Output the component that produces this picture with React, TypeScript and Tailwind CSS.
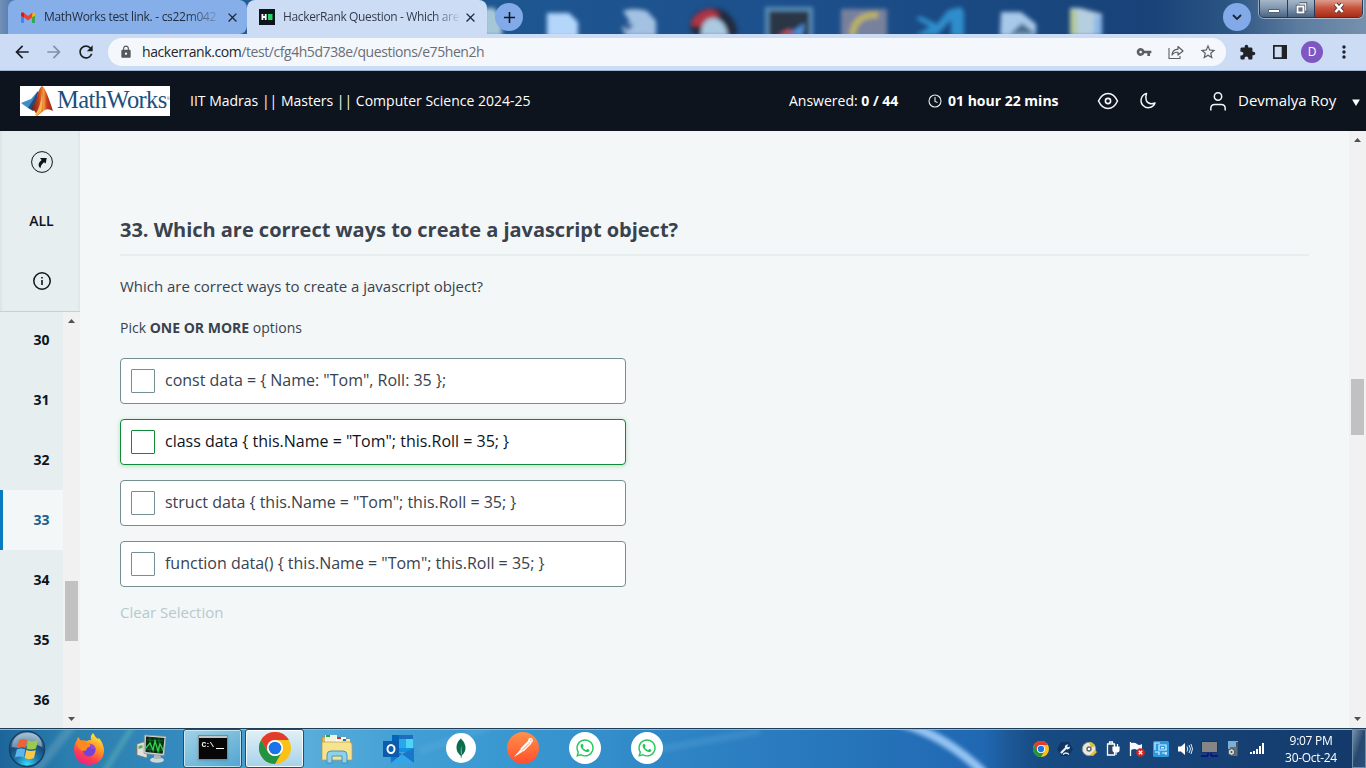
import type { ReactNode } from "react";
import { MdArrowBack, MdArrowForward, MdRefresh, MdLock, MdVpnKey, MdStarBorder, MdExtension, MdMoreVert, MdClose, MdAdd } from "react-icons/md";
import { FaWhatsapp } from "react-icons/fa";
import { SiMongodb } from "react-icons/si";

function ChromeLogo({ size }: { size: number }) {
  return (
    <svg width={size} height={size} viewBox="0 0 32 32">
      <circle cx="16" cy="16" r="16" fill="#fbc116" />
      <path d="M2.14 8A16 16 0 0 1 29.86 8H16a8 8 0 0 0-6.93 12z" fill="#e33b2e" />
      <path d="M2.14 8A16 16 0 0 0 16 32l6.93-12a8 8 0 0 1-13.86 0z" fill="#229342" />
      <circle cx="16" cy="16" r="8" fill="#fff" />
      <circle cx="16" cy="16" r="6.3" fill="#1a73e8" />
    </svg>
  );
}

function DesktopGlass() {
  return (
    <svg className="absolute inset-0" width="1366" height="34" viewBox="0 0 1366 34">
      <defs>
        <linearGradient id="glass" x1="0" x2="1" y1="0" y2="0">
          <stop offset="0" stopColor="#7190b8" />
          <stop offset=".02" stopColor="#2b5f9c" />
          <stop offset=".35" stopColor="#1e5792" />
          <stop offset=".6" stopColor="#1c4f8b" />
          <stop offset=".84" stopColor="#184278" />
          <stop offset=".9" stopColor="#2c5583" />
          <stop offset=".95" stopColor="#5b7b9f" />
          <stop offset="1" stopColor="#7691ac" />
        </linearGradient>
        <filter id="soft" x="-20%" y="-20%" width="140%" height="140%">
          <feGaussianBlur stdDeviation="2" />
        </filter>
      </defs>
      <rect width="1366" height="34" fill="url(#glass)" />
      <g filter="url(#soft)">
        <path d="M484 8h10l8 10v18h-18z" fill="#a6c7d8" />
        <path d="M547 13h22l9 9v15h-31z" fill="#b4d6fb" />
        <path d="M623 11q10-4 24 0l9 10v15h-30l-4-8 8-6z" fill="#a3c1e3" />
        <path d="M620 24h14l-6 7z" fill="#28588f" />
        <path d="M690 28q0-18 22-20 20 0 26 24l-4 4h-38z" fill="#232a3d" />
        <path d="M690 25q6-15 22-16l8 6-16 12z" fill="#ae3647" />
        <path d="M701 36q0-17 12-18 12 1 15 18z" fill="#abc9df" />
        <rect x="765" y="7" width="48" height="30" fill="#5a8db8" />
        <rect x="769" y="11" width="40" height="26" fill="#2a3645" />
        <path d="M777 36l12-7 6 6z" fill="#c55263" />
        <path d="M790 33l15-10-3 14z" fill="#4e8edb" />
        <rect x="841" y="9" width="46" height="30" fill="#78819c" />
        <path d="M878 15q-24-1-26 21" fill="none" stroke="#bdb45e" strokeWidth="6" />
        <path d="M948 10l13-3 3 5v24h-13V20l-14 15h-22l15-8-14-8 4-3 17 8z" fill="#2f8dcb" />
        <path d="M1001 12h20l15 12v12h-36z" fill="#a9c9e9" />
        <path d="M1010 34l12-11 14 11z" fill="#476d8f" />
        <path d="M1070 8h10l22 6v22h-32z" fill="#b5cfe0" />
        <path d="M1070 10h7v26h-7z" fill="#b5c896" />
        <path d="M1094 16h8v20h-8z" fill="#8cb8e8" />
      </g>
    </svg>
  );
}

function WindowButtons() {
  return (
    <div className="absolute right-[3px] top-0 flex h-[18px] w-[104px] overflow-hidden rounded-b-[5px] border border-t-0 border-[#283b52] shadow-[0_0_0_1px_rgba(255,255,255,0.45)]">
      <div className="flex w-[28px] items-end justify-center border-r border-[#283b52] bg-linear-to-b from-[#a6b6c9] via-[#8298b0] via-45% to-[#4a6482] pb-[4px]">
        <div className="h-[4px] w-[12px] rounded-[1px] border border-[#53606f] bg-white" />
      </div>
      <div className="flex w-[27px] items-center justify-center border-r border-[#283b52] bg-linear-to-b from-[#a6b6c9] via-[#8298b0] via-45% to-[#4a6482] pb-px">
        <svg width="13" height="13" viewBox="0 0 13 13">
          <path d="M4.5 2h6v6h-2" fill="none" stroke="#4b5867" strokeWidth="3.4" />
          <path d="M4.5 2h6v6h-2" fill="none" stroke="#fff" strokeWidth="1.6" />
          <rect x="2.500" y="4.500" width="6" height="6" fill="#5b6b80" stroke="#4b5867" strokeWidth="3.4" />
          <rect x="2.500" y="4.500" width="6" height="6" fill="#66758a" stroke="#fff" strokeWidth="1.8" />
        </svg>
      </div>
      <div className="flex flex-1 items-center justify-center bg-linear-to-b from-[#dc9c8c] via-[#c8553f] via-45% to-[#a82a16] pb-[2px]">
        <svg width="14" height="12" viewBox="0 0 14 12">
          <path d="M3.5 2l7 8M10.500 2l-7 8" stroke="#5c3b3c" strokeWidth="4.4" />
          <path d="M3.500 2l7 8M10.500 2l-7 8" stroke="#fff" strokeWidth="2.6" />
        </svg>
      </div>
    </div>
  );
}

function TabStrip() {
  return (
    <div className="relative h-[34px] overflow-hidden">
      <DesktopGlass />
      <div className="relative flex h-full pl-2">
        <div className="flex h-full w-[239px] items-center rounded-t-lg rounded-br-lg bg-[#86aee9] pl-[13px]">
          <svg width="14" height="11" viewBox="0 0 28 22">
            <path d="M0 3v17q0 2 2 2h4V9z" fill="#4285f4" />
            <path d="M28 3v17q0 2-2 2h-4V9z" fill="#34a853" />
            <path d="M22 2v9l6-4V4q0-5-6-2z" fill="#fbbc04" />
            <path d="M0 4q0-5 5-3l9 7 9-7-1 10-8 6-8-6-6-4z" fill="#ea4335" />
            <path d="M0 4v3l6 4V2Q0-1 0 4z" fill="#c5221f" />
          </svg>
          <span className="ml-[9px] w-[178px] overflow-hidden whitespace-nowrap bg-linear-to-r from-[#1e2a3a] from-80% to-[#86aee9] bg-clip-text text-[12px] tracking-[-0.3px] text-transparent">MathWorks test link. - cs22m042</span>
          <MdClose className="ml-[3px] size-[15px] text-[#1d2737]" />
        </div>
        <div className="flex h-full w-[240px] items-center rounded-t-lg bg-[#ccdcf5] pl-3">
          <svg width="16" height="16" viewBox="0 0 16 16">
            <path d="M0 0h16v16H0z" fill="#0e141e" />
            <path d="M2.500 5h1.800v2h1.500V5H7.600v6H5.800V9H4.300v2H2.500z" fill="#fff" />
            <path d="M9 5h4.500v6H9z" fill="#1fd85f" />
          </svg>
          <span className="ml-2 w-[178px] overflow-hidden whitespace-nowrap bg-linear-to-r from-[#303846] from-84% to-[#ccdcf5] bg-clip-text text-[12px] tracking-[-0.36px] text-transparent">HackerRank Question - Which are</span>
          <MdClose className="ml-[2px] size-[15px] text-[#1d2737]" />
        </div>
        <div className="ml-2 mt-[3px] flex size-7 items-center justify-center rounded-full bg-[#82a9e8]">
          <MdAdd className="size-[19px] text-[#14181e]" />
        </div>
        <div className="ml-auto mr-[115px] mt-[3px] flex size-7 items-center justify-center rounded-full bg-[#82a9e8]">
          <svg width="10" height="6" viewBox="0 0 10 6"><path d="M1 1l4 4 4-4" fill="none" stroke="#1c2534" strokeWidth="1.8" /></svg>
        </div>
      </div>
      <WindowButtons />
    </div>
  );
}

function Toolbar() {
  return (
    <div className="flex h-[37px] items-start border-b border-[#9fb5d2] bg-[#ccdcf5] pt-1">
      <div className="flex h-7 w-[108px] shrink-0 items-center pl-3">
        <MdArrowBack className="size-5 text-[#1b1f26]" />
        <MdArrowForward className="ml-3 size-5 text-[#8290a9]" />
        <MdRefresh className="ml-3 size-5 text-[#1b1f26]" />
      </div>
      <div className="flex h-7 w-[1118px] items-center rounded-full bg-[#f4f8fd] pl-[11px]">
        <MdLock className="size-[14px] text-[#54585d]" />
        <span className="ml-[9px] whitespace-nowrap pb-0.5 text-[14px] tracking-[-0.43px] text-[#6a6e74]"><span className="text-[#23262b]">hackerrank.com</span>/test/cfg4h5d738e/questions/e75hen2h</span>
        <MdVpnKey className="ml-auto size-4 text-[#5b5f64]" />
        <svg className="ml-4" width="16" height="16" viewBox="0 0 16 16">
          <path d="M1 4v10.500h11V12" fill="none" stroke="#5b5f64" strokeWidth="1.100" />
          <path d="M4 11q.5-5.500 6-5.800V2.500L15 7l-5 4V8.300Q6 8 4 11z" fill="none" stroke="#5b5f64" strokeWidth="1.200" strokeLinejoin="round" />
        </svg>
        <MdStarBorder className="ml-[15px] mr-[9px] size-[18px] text-[#5b5f64]" />
      </div>
      <div className="flex h-7 flex-1 items-center pl-[13px]">
        <MdExtension className="size-[17px] text-[#202226]" />
        <svg className="ml-[17px]" width="14" height="14" viewBox="0 0 14 14">
          <path d="M0 0h14v14H0zM1.700 1.700v10.600h7V1.700z" fill="#202226" fillRule="evenodd" />
        </svg>
        <div className="ml-[14px] flex size-[22px] items-center justify-center rounded-full bg-[#7e57c2] text-[12px] text-white">D</div>
        <MdMoreVert className="ml-[11px] size-[20px] text-[#202226]" />
      </div>
    </div>
  );
}

function MathWorksLogo() {
  return (
    <div className="flex h-[30px] w-[150px] items-center bg-white">
      <svg className="shrink-0" width="36" height="30" viewBox="0 0 36 30">
        <defs>
          <linearGradient id="peak" x1="0" x2="1">
            <stop offset="0" stopColor="#5b1d1c" />
            <stop offset=".35" stopColor="#c3401d" />
            <stop offset=".58" stopColor="#f39a3c" />
            <stop offset=".72" stopColor="#c9401d" />
            <stop offset="1" stopColor="#952018" />
          </linearGradient>
        </defs>
        <path d="M1 17l10-4 6-7 2-1-7 16-4 1z" fill="#3b8ec9" />
        <path d="M8 22l5-8 5-9-1 17-4 3z" fill="#274c76" />
        <path d="M11 22q5-5 7-15 2-6 4-7 3 0 11 25-5-3-8-1-3 2-8 6-2-6-6-8z" fill="url(#peak)" />
        <path d="M15 29q6-9 7-22 1 13-1 19l-4 4z" fill="#f9b652" />
      </svg>
      <span className="ml-px whitespace-nowrap pb-0.5 font-['Liberation_Serif',serif] text-[24.5px] leading-none tracking-[-0.6px] text-[#1c4f7c]">MathWorks</span>
      <span className="-mt-1 text-[4px] text-[#1c4f7c]">®</span>
    </div>
  );
}

function Header() {
  return (
    <header className="flex h-[60px] items-center bg-[#0e141e] pl-5 text-[14px] text-white">
      <MathWorksLogo />
      <span className="ml-5 w-[599px] whitespace-nowrap pb-0.5">IIT Madras || Masters || Computer Science 2024-25</span>
      <span className="w-[139px] whitespace-nowrap pb-0.5">Answered: <b>0 / 44</b></span>
      <svg width="14" height="14" viewBox="0 0 14 14" fill="none" stroke="#e9edf2" strokeWidth="1.100">
        <circle cx="7" cy="7" r="6" /><path d="M7 3v4.500l2.500 1" />
      </svg>
      <b className="ml-[6px] w-[149px] whitespace-nowrap pb-0.5">01 hour 22 mins</b>
      <svg width="22" height="18" viewBox="0 0 22 18" fill="none" stroke="#f3f6f8" strokeWidth="1.600">
        <path d="M1.500 9Q5 1.500 11 1.500T20.500 9Q17 16.500 11 16.500T1.500 9z" /><circle cx="11" cy="9" r="2.600" />
      </svg>
      <svg className="ml-5" width="18" height="18" viewBox="0 0 18 18" fill="none" stroke="#f3f6f8" strokeWidth="1.500" strokeLinejoin="round">
        <path d="M7.500 1.500A7.200 7.200 0 1 0 16 11Q9.500 13.500 7.300 8.500 6.200 5 7.500 1.500z" />
      </svg>
      <svg className="ml-[52px]" width="18" height="20" viewBox="0 0 18 20" fill="none" stroke="#f3f6f8" strokeWidth="1.500">
        <circle cx="9" cy="5.500" r="3.700" /><path d="M1.800 19.500v-2q0-4 4-4h6.400q4 0 4 4v2" />
      </svg>
      <span className="ml-[11px] w-[114px] whitespace-nowrap pb-0.5 text-[15px]">Devmalya Roy</span>
      <svg className="mt-0.5" width="8" height="7" viewBox="0 0 9 8"><path d="M0 .5h9L4.500 8z" fill="#fff" /></svg>
    </header>
  );
}

function Scrollbar({ lead, thumb }: { lead: string; thumb: string }) {
  return (
    <div className="flex h-full w-[17px] shrink-0 flex-col items-center bg-[#f1f1f1]">
      <svg className="mt-[7px] shrink-0" width="7" height="4" viewBox="0 0 7 4"><path d="M0 4L3.500 0 7 4z" fill="#505050" /></svg>
      <div className={`shrink-0 ${lead}`} />
      <div className={`w-[13px] shrink-0 bg-[#c1c1c1] ${thumb}`} />
      <svg className="mb-[7px] mt-auto shrink-0" width="7" height="4" viewBox="0 0 7 4"><path d="M0 0L3.500 4 7 0z" fill="#505050" /></svg>
    </div>
  );
}

const questionNumbers = [30, 31, 32, 33, 34, 35, 36];

function Sidebar() {
  return (
    <aside className="flex w-20 shrink-0 flex-col bg-[#e7eeef] text-[14px] font-bold text-[#0e141e]">
      <div className="flex h-[181px] shrink-0 flex-col items-center border-b border-[#c5d1d8] pl-1 shadow-[inset_3px_0_3px_-2px_#d4dfe4,inset_-3px_0_3px_-2px_#d9e2e6]">
        <div className="flex h-[61px] items-center">
          <svg width="22" height="22" viewBox="0 0 22 22">
            <circle cx="11" cy="11" r="10.400" fill="none" stroke="#0e141e" strokeWidth="1" />
            <path d="M9 7h6.700l-1 5.500-1.700-1.200Q10 13.500 9.300 17.200 5 13.500 10.600 9z" fill="#0e141e" />
          </svg>
        </div>
        <div className="flex h-[59px] items-center pb-0.5 pr-px font-semibold">ALL</div>
        <div className="flex h-[60px] items-center">
          <svg width="18" height="18" viewBox="0 0 18 18">
            <circle cx="9" cy="9" r="8.200" fill="none" stroke="#0e141e" strokeWidth="1.500" />
            <path d="M9 8v5M9 5v1.500" stroke="#0e141e" strokeWidth="1.600" />
          </svg>
        </div>
      </div>
      <div className="flex min-h-0 flex-1 overflow-hidden">
        <div className="-mt-0.5 w-[63px]">
          {questionNumbers.map((n) => (
            <div
              key={n}
              className={n === 33 ? "flex h-[60px] items-center justify-center border-l-[3px] border-[#0b7bc1] bg-[#f3f7f7] pb-0.5 pl-[17px] text-[#1b5f8f]" : "flex h-[60px] items-center justify-center pb-0.5 pl-5"}
            >
              {n}
            </div>
          ))}
        </div>
        <Scrollbar lead="h-[258px]" thumb="h-[60px]" />
      </div>
    </aside>
  );
}

const options = [
  'const data = { Name: "Tom", Roll: 35 };',
  'class data { this.Name = "Tom"; this.Roll = 35; }',
  'struct data { this.Name = "Tom"; this.Roll = 35; }',
  'function data() { this.Name = "Tom"; this.Roll = 35; }',
];

function Question() {
  return (
    <main className="min-w-0 flex-1 bg-[#f3f7f7] pl-10 text-[#39424e]">
      <h1 className="mt-[84px] h-[39px] w-[1189px] whitespace-nowrap text-[20px] font-bold leading-[30px] tracking-[-0.02px]">33. Which are correct ways to create a javascript object?</h1>
      <div className="h-[2px] w-[1189px] bg-[#e7eeef]" />
      <p className="mt-5 text-[15px] leading-[21px] tracking-[-0.02px]">Which are correct ways to create a javascript object?</p>
      <p className="mt-[21px] text-[14px] leading-5">Pick <b>ONE OR MORE</b> options</p>
      <div className="mt-5 flex flex-col gap-[15px]">
        {options.map((text, i) => (
          <label
            key={text}
            className={
              i === 1
                ? "flex h-[46px] w-[506px] items-center whitespace-nowrap rounded border border-[#0f8a37] bg-white pl-[10px] text-[16px] text-[#0e141e] shadow-[0_1px_4px_rgba(15,138,55,0.25)]"
                : "flex h-[46px] w-[506px] items-center whitespace-nowrap rounded border border-[#738f93] bg-white pl-[10px] text-[16px]"
            }
          >
            <span className={i === 1 ? "mr-[10px] size-6 rounded-[1px] border border-[#0f8a37]" : "mr-[10px] size-6 rounded-[1px] border border-[#738f93]"} />
            <span className="pb-0.5 tracking-[-0.01px]">{text}</span>
          </label>
        ))}
      </div>
      <button className="mt-[13px] block text-[15px] leading-6 text-[#b7c9cc]">Clear Selection</button>
    </main>
  );
}

function TaskSlot({ children }: { children: ReactNode }) {
  return <div className="flex w-[62px] shrink-0 items-center justify-center">{children}</div>;
}

function StartOrb() {
  return (
    <svg width="38" height="38" viewBox="0 0 38 38">
      <defs>
        <radialGradient id="orb" cx=".5" cy=".95" r=".9">
          <stop offset="0" stopColor="#38e0ff" />
          <stop offset=".35" stopColor="#1b7db4" />
          <stop offset=".7" stopColor="#174a78" />
          <stop offset="1" stopColor="#7da5c2" />
        </radialGradient>
      </defs>
      <circle cx="19" cy="19" r="17.500" fill="url(#orb)" stroke="#1a4162" strokeWidth="1.500" />
      <path d="M4 17Q5 4 19 3t15 14q-7-4-15-1T4 17z" fill="#c9dbe8" opacity=".5" />
      <path d="M11 10q4-2 8 0l-1.500 8q-4-2-8.500 0z" fill="#ed6134" />
      <path d="M20 10.500q5 2 10-.5l-2 8.500q-5 2-9.500 0z" fill="#9cca4a" />
      <path d="M8.800 19.500q4-2 8.500 0l-1.800 8q-4-2-8.500 0z" fill="#60b4ec" />
      <path d="M18.300 20q5 2 9.500 0L26 28q-5 2.300-9.400 0z" fill="#fcc843" />
    </svg>
  );
}

function Firefox() {
  return (
    <svg width="32" height="32" viewBox="0 0 32 32">
      <defs>
        <linearGradient id="fox" x1=".8" x2=".3" y1="0" y2="1">
          <stop offset="0" stopColor="#fff14a" />
          <stop offset=".4" stopColor="#ff9a22" />
          <stop offset=".75" stopColor="#ff3b53" />
          <stop offset="1" stopColor="#e8218c" />
        </linearGradient>
      </defs>
      <path d="M1 17Q1 11 4 7l1-3 3 4q3-1 6 0 1-1 4-1-1-4 2-7 2 4 5 6l1-1q5 6 5 13-1 13-15 14Q2 31 1 17z" fill="url(#fox)" />
      <circle cx="16" cy="17" r="6.500" fill="#7343d8" />
      <path d="M3 10q4-4 9-2 3 3 7 3-2 3-5 4 0 3-4 3-4-1-7-8z" fill="#ff8920" />
      <path d="M17 11q5 0 6 6-3-2-5-1z" fill="#9d48d4" />
    </svg>
  );
}

function Monitor() {
  return (
    <svg width="32" height="30" viewBox="0 0 32 30">
      <path d="M1 11l8-4v16l-8-2z" fill="#6d7374" />
      <path d="M2 10l10-3v17l-10-3z" fill="#dfe3e0" stroke="#747b7b" strokeWidth=".7" />
      <path d="M3.500 12l4-1v3l-4 1z" fill="#5fae4b" />
      <ellipse cx="22" cy="26" rx="7" ry="2.800" fill="#cfd6d8" />
      <path d="M19 18h6l1 7h-7z" fill="#aeb7ba" />
      <path d="M9.500 1l21.500 1.500-2 19-20-2z" fill="#d2d8d5" stroke="#89928f" strokeWidth=".7" />
      <path d="M11 2.500l18.500 1.500-1.800 15.800-17.200-1.800z" fill="#092a14" />
      <path d="M12 6l16 1M11 15l17 1.500M15 3v15M24 4v15" fill="none" stroke="#1a7f32" strokeWidth=".7" />
      <path d="M11 14l4-5 3 7 2-9 3 10 2-7 3 6" fill="none" stroke="#2fd347" strokeWidth="1.400" />
    </svg>
  );
}

function CommandPrompt() {
  return (
    <div className="flex h-[25px] w-[30px] flex-col border border-[#7d8b91] bg-[#070707] shadow-sm">
      <div className="h-[2px] shrink-0 bg-[#bbc5cb]" />
      <div className="flex items-end pl-[3px] pt-0.5">
        <span className="font-['Liberation_Mono',monospace] text-[8px] font-bold leading-[10px] tracking-[-0.8px] text-white">C:\</span>
        <span className="mb-px ml-0.5 h-px w-2 bg-white" />
      </div>
    </div>
  );
}

function Explorer() {
  return (
    <svg width="34" height="30" viewBox="0 0 34 30">
      <path d="M2 3h8l2 2h17v19H2z" fill="#dfbe59" stroke="#a9843a" strokeWidth=".8" />
      <path d="M5 1h12v8H5z" fill="#eef5df" /><path d="M6 1h4v2H6z" fill="#2ba53c" />
      <path d="M16 3h10v6H16z" fill="#fff" /><path d="M17 3h4v2h-4z" fill="#c83c30" />
      <path d="M22 5h8v4h-8z" fill="#f9e9aa" /><path d="M23 5h3v2h-3z" fill="#2b6ec1" />
      <path d="M2 8h27q3 0 3 3v15H2z" fill="#f5e38f" stroke="#c09c45" strokeWidth=".7" />
      <path d="M7 29V21q0-4 4-4h12q4 0 4 4v8h-5v-7H12v7z" fill="#8fd0ec" stroke="#3d8dbd" strokeWidth=".9" />
    </svg>
  );
}

function Outlook() {
  return (
    <svg width="32" height="30" viewBox="0 0 32 30">
      <path d="M9 1h21v17H9z" fill="#1490df" />
      <path d="M9 1h7v9H9z" fill="#0464b5" /><path d="M16 1h14v4H16z" fill="#1b6fba" /><path d="M23 5h7v9h-7z" fill="#50d4f6" /><path d="M16 5h7v9h-7z" fill="#28a8ea" />
      <path d="M7 14l12 6 12-6v15H8z" fill="#1976ca" />
      <path d="M8 29l11-9 12 9z" fill="#33a5e9" />
      <path d="M0 7h16v16H0z" fill="#0b5cad" />
      <ellipse cx="8" cy="15" rx="3.500" ry="4" fill="none" stroke="#fff" strokeWidth="2" />
    </svg>
  );
}

function Postman() {
  return (
    <svg className="mb-0.5" width="32" height="32" viewBox="0 0 32 32">
      <defs>
        <linearGradient id="post" x1="0" x2="0" y1="0" y2="1">
          <stop offset="0" stopColor="#ff9149" />
          <stop offset="1" stopColor="#ff4f2c" />
        </linearGradient>
      </defs>
      <circle cx="16" cy="16" r="16" fill="url(#post)" />
      <path d="M7 25l6-7 8-8 2 2-8 8z" fill="#fff" />
      <path d="M14 17l8-8M16 19l8-8" stroke="#fff" strokeWidth="1.600" />
      <path d="M15 18.500l7-7" stroke="#ff7a42" strokeWidth=".9" />
      <circle cx="23.500" cy="8.500" r="2.400" fill="#fff" />
      <path d="M23 8.500l1.500-1" stroke="#ff7a42" strokeWidth=".9" />
    </svg>
  );
}

function Tray() {
  return (
    <div className="flex items-center [&>div]:flex [&>div]:w-6 [&>div]:items-center [&>div]:justify-center">
      <div><ChromeLogo size={16} /></div>
      <div>
        <svg width="16" height="16" viewBox="0 0 16 16">
          <path d="M4 1h8l4 7-4 7H4L0 8z" fill="#0f3564" />
          <path d="M4.500 11.500L9 7" stroke="#e7f1f8" strokeWidth="2.200" strokeLinecap="round" />
          <path d="M11.500 3.500Q8 3 7.800 6L10 8.500q3 0 3-3l-2 .7-1-1z" fill="#e7f1f8" />
          <path d="M6 13.500q3-3 6 0" fill="none" stroke="#e7f1f8" strokeWidth="1.200" />
        </svg>
      </div>
      <div>
        <svg width="16" height="16" viewBox="0 0 16 16">
          <circle cx="8" cy="8" r="6.700" fill="#e9e8e0" stroke="#969683" />
          <path d="M8 1a7 7 0 0 1 6 4l-4 2z" fill="#d8c32d" /><circle cx="8" cy="8" r="2.700" fill="#5e6a72" /><circle cx="8" cy="8" r="1.200" fill="#fff" />
          <path d="M9 14l5-5 2 2-4 4z" fill="#ebbb33" />
        </svg>
      </div>
      <div>
        <svg width="16" height="16" viewBox="0 0 16 16">
          <path d="M2.500 3h7v11h-7zM4.500 1h3v2h-3z" fill="#29466b" stroke="#fff" strokeWidth="1.300" />
          <path d="M8 6h6v3q0 2-3 2t-3-2zM9.500 3v3M12.500 3v3M11 11v3" fill="#fff" stroke="#fff" strokeWidth="1.200" />
        </svg>
      </div>
      <div>
        <svg width="16" height="16" viewBox="0 0 16 16">
          <path d="M1.500 1v14" stroke="#fff" strokeWidth="1.300" /><path d="M2 2q4-1 6 1t5 0v7q-3 1-5-1t-6 0z" fill="#f8fbff" />
          <circle cx="11.500" cy="11.500" r="4.300" fill="#d7251c" /><path d="M9.800 9.800l3.400 3.400m0-3.400l-3.400 3.400" stroke="#fff" strokeWidth="1.300" />
        </svg>
      </div>
      <div>
        <svg width="16" height="16" viewBox="0 0 16 16">
          <rect width="16" height="16" rx="1.500" fill="#2d98dd" />
          <path d="M2 9V2h5M6 4h7v5H6zM2 11h4v3M9 12h5M13 11v3" fill="none" stroke="#d8f3ff" strokeWidth="1.200" />
          <path d="M8 6h3v1.500H8z" fill="#d8f3ff" />
        </svg>
      </div>
      <div>
        <svg width="16" height="16" viewBox="0 0 16 16">
          <path d="M1 5.500h3L8 2v12l-4-3.500H1z" fill="#fff" /><path d="M10 5.500q1.500 2.500 0 5M12 4q3 4 0 8M14 3q3 5 0 10" fill="none" stroke="#d9e8f4" strokeWidth="1" />
        </svg>
      </div>
      <div>
        <svg width="17" height="16" viewBox="0 0 17 16">
          <path d="M.5.5h16v11H.5z" fill="#858585" stroke="#1c2f73" /><path d="M7 12v3M10 12v3M0 15h7M10 15h7" stroke="#080d86" strokeWidth="1.500" />
        </svg>
      </div>
      <div>
        <svg width="14" height="16" viewBox="0 0 14 16">
          <path d="M2 0h10v8H2z" fill="#7ab0d8" /><path d="M10 1h2v14h-2z" fill="#4a545b" /><path d="M4 6h7v9H5z" fill="#687076" /><circle cx="5.500" cy="11" r="3.300" fill="#d3d8d8" stroke="#454f55" /><circle cx="5.500" cy="11" r="1" fill="#454f55" />
        </svg>
      </div>
      <div>
        <svg width="16" height="12" viewBox="0 0 16 12" fill="#fff"><path d="M1 9h2v2H1zM4 8h2v3H4zM7 6h2v5H7zM10 3h2v8h-2zM13 0h2v11h-2z" /></svg>
      </div>
    </div>
  );
}

function Taskbar() {
  return (
    <footer className="relative h-10 overflow-hidden border-t border-[#203d57]">
      <svg className="absolute inset-0" width="1366" height="39" viewBox="0 0 1366 39">
        <defs>
          <linearGradient id="bar" x1="0" x2="1">
            <stop offset="0" stopColor="#1c659b" />
            <stop offset=".05" stopColor="#2a7fae" />
            <stop offset=".13" stopColor="#3489be" />
            <stop offset=".22" stopColor="#5aaed9" />
            <stop offset=".3" stopColor="#419fd5" />
            <stop offset=".42" stopColor="#3592cd" />
            <stop offset=".5" stopColor="#2e84c5" />
            <stop offset=".72" stopColor="#2068b2" />
            <stop offset=".74" stopColor="#1c5795" />
            <stop offset=".76" stopColor="#174b83" />
            <stop offset="1" stopColor="#14396a" />
          </linearGradient>
          <filter id="ray" x="-20%" y="-20%" width="140%" height="140%"><feGaussianBlur stdDeviation="2" /></filter>
        </defs>
        <path d="M0 0h1366v39H0z" fill="url(#bar)" />
        <g filter="url(#ray)" fill="none">
          <path d="M900-6q45 12 84 50" stroke="#95c4f4" strokeWidth="9" />
          <path d="M72-3L35 43" stroke="#77abc6" strokeWidth="9" opacity=".4" />
          <path d="M133-3L104 43" stroke="#7cceae" strokeWidth="5" opacity=".4" />
          <path d="M650 22L760 2M420 22L490-2" stroke="#79bce7" strokeWidth="7" opacity=".2" />
        </g>
        <path d="M0 .5h1366" stroke="#8cb9d8" />
      </svg>
      <div className="relative flex h-full">
        <div className="flex w-[58px] items-center pl-2"><StartOrb /></div>
        <TaskSlot><Firefox /></TaskSlot>
        <TaskSlot><Monitor /></TaskSlot>
        <div className="ml-px mr-[3px] flex w-[59px] items-center justify-center rounded-[3px] border border-[#1b516f] bg-linear-to-br from-[#a2d3e6] to-[#50a5d0] pb-0.5 shadow-[inset_0_0_0_1px_rgba(211,239,249,0.8)]"><CommandPrompt /></div>
        <div className="mr-[2px] flex w-[59px] items-center justify-center rounded-[3px] border border-[#1b516f] bg-linear-to-b from-[#e1f0f5] to-[#a6d2ea] pb-0.5 shadow-[inset_0_0_0_1px_rgba(255,255,255,0.85)]"><ChromeLogo size={32} /></div>
        <TaskSlot><Explorer /></TaskSlot>
        <TaskSlot><Outlook /></TaskSlot>
        <TaskSlot><div className="mb-0.5 flex size-[30px] items-center justify-center rounded-full bg-white"><SiMongodb className="size-5 text-[#0b6b4c]" /></div></TaskSlot>
        <TaskSlot><Postman /></TaskSlot>
        <TaskSlot><div className="mb-0.5 flex size-8 items-center justify-center rounded-full bg-white"><FaWhatsapp className="size-5 text-[#25c75c]" /></div></TaskSlot>
        <TaskSlot><div className="mb-0.5 flex size-8 items-center justify-center rounded-full bg-white"><FaWhatsapp className="size-5 text-[#25c75c]" /></div></TaskSlot>
        <div className="ml-auto flex">
          <Tray />
          <div className="w-[83px] pl-px pt-[3px] text-center text-[12px] leading-[17px] tracking-[-0.3px] text-white"><div>9:07 PM</div><div>30-Oct-24</div></div>
          <div className="w-[14px] border border-[#6e8da9] bg-linear-to-br from-[#7791a9] via-[#28496f] via-50% to-[#294f7b]" />
        </div>
      </div>
    </footer>
  );
}

export default function App() {
  return (
    <div className="flex h-[768px] w-[1366px] flex-col overflow-hidden bg-[#f3f7f7] font-['Open_Sans','Noto_Sans',sans-serif]">
      <TabStrip />
      <Toolbar />
      <Header />
      <div className="flex h-[597px]">
        <Sidebar />
        <Question />
        <Scrollbar lead="h-[237px]" thumb="h-[56px]" />
      </div>
      <Taskbar />
    </div>
  );
}
